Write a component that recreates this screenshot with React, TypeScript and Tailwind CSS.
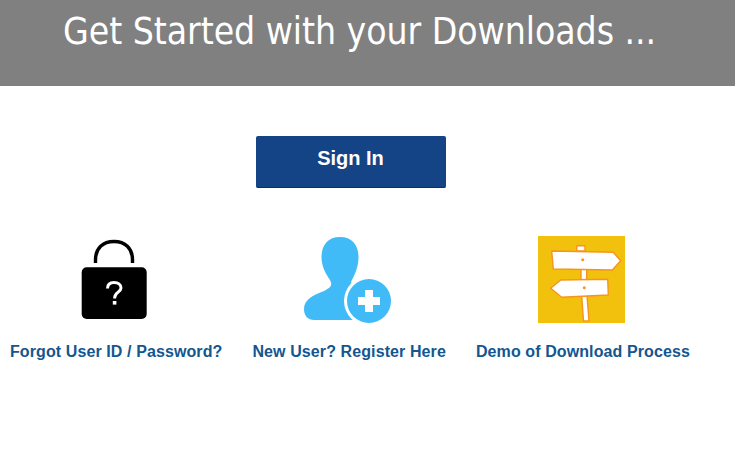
const LockIcon = () => (
  <svg width="87" height="87" viewBox="0 0 87 87">
    <path d="M25.5 27V24C25.5 12 33 5.5 44 5.5C55 5.5 62.5 12 62.5 24V27" fill="none" stroke="#000" strokeWidth="3.4" />
    <rect x="11.7" y="31.3" width="65" height="51.7" rx="5" fill="#000" />
    <path d="M37.5 52.5C37.5 48 40.5 46.5 44 46.5C48 46.5 51 48.5 51 52C51 56 44.7 56.5 44.7 61.5V62.5" fill="none" stroke="#fff" strokeWidth="3" />
    <rect x="42.8" y="65" width="3.6" height="3.6" fill="#fff" />
  </svg>
);

const UserPlusIcon = () => (
  <svg width="87" height="87" viewBox="0 0 87 87">
    <path d="M36 1C24 1 17.5 9 17.5 21C17.5 31 22 38 26 44C29 50 26 52 20 55C10 59 0 63 0 73C0 80 4 84 10 84H52V52L47 46C51 38 54.5 31 54.5 21C54.5 9 48 1 36 1Z" fill="#41BBF8" />
    <circle cx="65" cy="65" r="25" fill="#fff" />
    <circle cx="65" cy="65" r="22" fill="#41BBF8" />
    <rect x="54" y="61" width="22" height="8" fill="#fff" />
    <rect x="61" y="54" width="8" height="22" fill="#fff" />
  </svg>
);

const SignpostIcon = () => (
  <svg width="87" height="87" viewBox="0 0 87 87">
    <rect width="87" height="87" fill="#F2C10E" />
    <g fill="#fff" stroke="#F7941D" strokeWidth="1.4" strokeLinejoin="round">
      <path d="M38.7 9.7H47V15H38.7Z" />
      <path d="M43 33H48.7V45H43Z" />
      <path d="M43.7 60H49L51 85H45.5Z" />
      <path d="M13.7 15L75.3 16.3L82.7 24.7L74.3 34L15.3 33Z" />
      <path d="M69.7 43.3L70.3 59L23.7 61.3L12.7 52.3L22.7 44Z" />
    </g>
    <circle cx="44.7" cy="23.7" r="1.5" fill="#F7941D" />
    <circle cx="46.3" cy="51.7" r="1.5" fill="#F7941D" />
  </svg>
);

const links = [
  { label: 'Forgot User ID / Password?', icon: <LockIcon />, iconClass: 'mr-[6px]' },
  { label: 'New User? Register Here', icon: <UserPlusIcon />, iconClass: 'mr-[4px]' },
  { label: 'Demo of Download Process', icon: <SignpostIcon />, iconClass: 'mr-[3px]' },
];

export default function App() {
  return (
    <div className="min-h-[449px] bg-white font-['Liberation_Sans',sans-serif]">
      <div className="h-[86px] bg-[#808080] pl-[63px] pt-[8px]">
        <h1 className="font-['DejaVu_Sans',sans-serif] font-stretch-condensed text-[37px] leading-[48px] tracking-[-0.06px] text-white">
          Get Started with your Downloads ...
        </h1>
      </div>

      <div className="ml-[256px] mt-[50px] h-[52px] w-[190px] rounded-[2px] border-b border-[#0c2f63] bg-[#144486] pr-[1px] pt-[11px] text-center text-[20px] font-bold leading-[22px] text-white">
        Sign In
      </div>

      <div className="mt-[48px] flex gap-[30px] pl-[10px]">
        {links.map((link) => (
          <div key={link.label} className="flex flex-col items-center">
            <div className={link.iconClass}>{link.icon}</div>
            <a className="mt-[20px] whitespace-nowrap text-[16px] font-bold leading-[18px] tracking-[0.1px] text-[#14568f]">
              {link.label}
            </a>
          </div>
        ))}
      </div>
    </div>
  );
}
